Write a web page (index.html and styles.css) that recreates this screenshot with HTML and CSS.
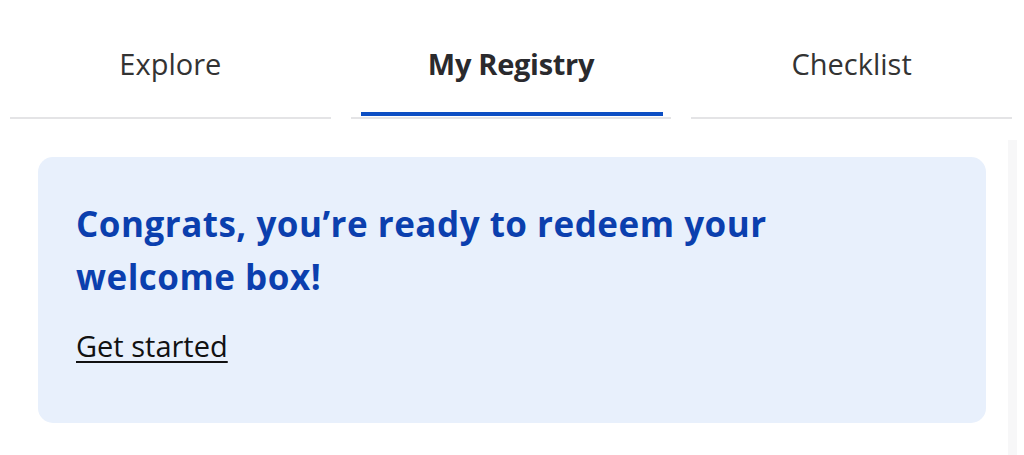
FILE: index.html
```html
<!DOCTYPE html>
<html lang="en">
<head>
    <meta charset="UTF-8">
    <meta name="viewport" content="width=device-width, initial-scale=1.0">
    <title>My Registry</title>
    <link rel="stylesheet" href="styles.css">
</head>
<body>

    <nav class="tabs">
        <a href="#" class="tab">Explore</a>
        <a href="#" class="tab active">My Registry</a>
        <a href="#" class="tab">Checklist</a>
    </nav>

    <div class="content">
        <main class="main">
            <section class="promo-card">
                <h2 class="promo-title">Congrats, you’re ready to redeem your welcome box!</h2>
                <a href="#" class="promo-link">Get started</a>
            </section>
        </main>
        <div class="scroll-track"></div>
    </div>

</body>
</html>
```

FILE: styles.css
```css
body {
    font-family: 'Open Sans', 'Noto Sans', sans-serif;
    background-color: #fff;
    margin: 0;
    padding: 0;
    color: #222;
}

/* tabs */
.tabs {
    display: grid;
    grid-template-columns: repeat(3, 1fr);
    column-gap: 20px;
    padding: 0 12px 0 10px;
}

.tab {
    position: relative;
    display: block;
    padding: 43px 0 32px;
    font-size: 29px;
    line-height: 42px;
    text-align: center;
    color: #333;
    text-decoration: none;
    border-bottom: 2px solid #e4e4e6;
}

.tab.active {
    font-weight: 700;
    color: #2a2a2d;
    letter-spacing: -0.3px;
}

.tab.active::after {
    content: "";
    position: absolute;
    left: 10px;
    right: 8px;
    bottom: 1px;
    height: 4px;
    background-color: #0d4fc4;
}

/* content */
.content {
    display: flex;
    padding-top: 21px;
}

.main {
    flex: 1;
    padding: 17px 22px 0 38px;
}

.scroll-track {
    width: 9px;
    height: 320px;
    margin-right: 7px;
    background-color: #f7f7f8;
}

.promo-card {
    background-color: #e8f0fc;
    border-radius: 15px;
    padding: 40px 38px 57px;
}

.promo-title {
    margin: 0 0 23px;
    font-size: 35px;
    line-height: 53px;
    font-weight: 700;
    color: #0b3fae;
    letter-spacing: 0.5px;
    max-width: 760px;
}

.promo-link {
    display: inline-block;
    font-size: 29px;
    line-height: 40px;
    color: #111;
    text-decoration: underline;
    text-decoration-thickness: 2px;
    text-underline-offset: 4px;
}
```
